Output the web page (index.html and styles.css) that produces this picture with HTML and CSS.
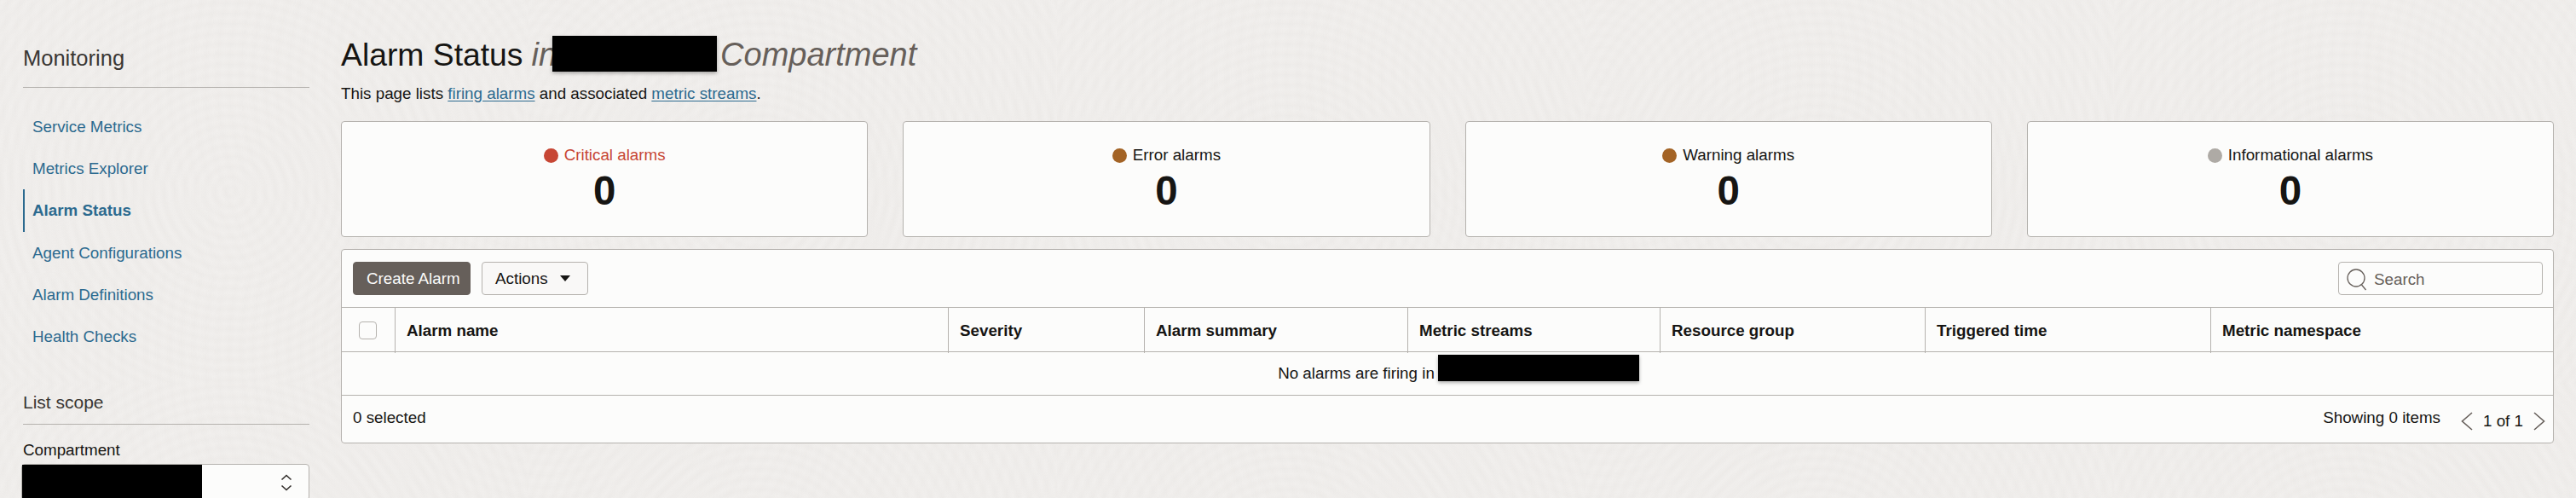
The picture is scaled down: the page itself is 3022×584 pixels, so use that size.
FILE: index.html
```html
<!DOCTYPE html>
<html>
<head>
  <title>Alarm Status</title>
  <meta http-equiv="Content-Type" content="text/html; charset=utf-8">
  <link rel="stylesheet" href="styles.css">
</head>
<body>
<div class="page">
  <div class="sidebar">
    <h2 class="side-title">Monitoring</h2>
    <ul class="side-nav">
      <li><a href="#">Service Metrics</a></li>
      <li><a href="#">Metrics Explorer</a></li>
      <li class="active"><a href="#">Alarm Status</a></li>
      <li><a href="#">Agent Configurations</a></li>
      <li><a href="#">Alarm Definitions</a></li>
      <li><a href="#">Health Checks</a></li>
    </ul>
    <h3 class="scope-title">List scope</h3>
    <div class="scope-label">Compartment</div>
    <div class="scope-select">
      <span class="redact redact-select"></span>
      <svg class="updown" width="14" height="20" viewBox="0 0 14 20">
        <path d="M1.5 6.5 7 1.5l5.5 5M1.5 13.5 7 18.5l5.5-5" fill="none" stroke="#312d2a" stroke-width="1.6"/>
      </svg>
    </div>
  </div>

  <div class="main">
    <h1 class="title">
      <span>Alarm Status</span>
      <em class="title-in">in</em>
      <span class="redact redact-title"></span>
      <em class="title-comp">Compartment</em>
    </h1>
    <p class="intro">This page lists <a href="#">firing alarms</a> and associated <a href="#">metric streams</a>.</p>

    <div class="cards">
      <div class="card">
        <div class="card-label critical"><i class="dot dot-critical"></i>Critical alarms</div>
        <div class="card-count">0</div>
      </div>
      <div class="card">
        <div class="card-label"><i class="dot dot-error"></i>Error alarms</div>
        <div class="card-count">0</div>
      </div>
      <div class="card">
        <div class="card-label"><i class="dot dot-error"></i>Warning alarms</div>
        <div class="card-count">0</div>
      </div>
      <div class="card">
        <div class="card-label"><i class="dot dot-info"></i>Informational alarms</div>
        <div class="card-count">0</div>
      </div>
    </div>

    <div class="panel">
      <div class="toolbar">
        <button class="btn btn-primary">Create Alarm</button>
        <button class="btn btn-menu">Actions <i class="caret"></i></button>
        <div class="search">
          <svg width="26" height="28" viewBox="0 0 26 28">
            <circle cx="12" cy="12" r="10" fill="none" stroke="#665f5a" stroke-width="1.3"/>
            <path d="M18.5 20 23.5 26" fill="none" stroke="#665f5a" stroke-width="1.3"/>
          </svg>
          <span>Search</span>
        </div>
      </div>

      <div class="thead">
        <div class="th th-check"><span class="checkbox"></span></div>
        <div class="th">Alarm name</div>
        <div class="th">Severity</div>
        <div class="th">Alarm summary</div>
        <div class="th">Metric streams</div>
        <div class="th">Resource group</div>
        <div class="th">Triggered time</div>
        <div class="th">Metric namespace</div>
      </div>

      <div class="empty-row">
        <span>No alarms are firing in</span>
        <span class="redact redact-row"></span>
      </div>

      <div class="tfoot">
        <span>0 selected</span>
        <span class="showing">Showing 0 items</span>
        <div class="pager">
          <svg width="14" height="22" viewBox="0 0 14 22"><path d="M13 1 1.500 11 13 21" fill="none" stroke="#665f5a" stroke-width="1.6"/></svg>
          <span>1 of 1</span>
          <svg width="14" height="22" viewBox="0 0 14 22"><path d="M1 1l11.500 10L1 21" fill="none" stroke="#665f5a" stroke-width="1.6"/></svg>
        </div>
      </div>
    </div>
  </div>
</div>
</body>
</html>
```

FILE: styles.css
```css
html, body {
  margin: 0;
  height: 584px;
  overflow: hidden;
}

body {
  background-color: #f1efed;
  background-image:
    repeating-radial-gradient(circle at 270px 225px, rgba(150, 142, 135, 0) 0, rgba(150, 142, 135, 0.022) 6px, rgba(150, 142, 135, 0) 12px),
    repeating-radial-gradient(circle at 640px 90px, rgba(150, 142, 135, 0) 0, rgba(150, 142, 135, 0.015) 7px, rgba(150, 142, 135, 0) 14px);
  background-size: 620px 450px, 1240px 320px;
  font-family: "Liberation Sans", Arial, sans-serif;
  font-size: 18.8px;
  color: #161513;
}

a {
  color: #2c6a8f;
  text-decoration: none;
}

.page {
  display: flex;
  gap: 37px;
  padding-left: 27px;
  padding-right: 26px;
}

/* left column */
.sidebar {
  width: 336px;
  flex: none;
}

.side-title {
  margin: 50px 0 0;
  height: 52px;
  line-height: 36px;
  font-size: 25.5px;
  font-weight: normal;
  color: #3a3734;
  border-bottom: 1px solid #b5b2ae;
}

.side-nav {
  list-style: none;
  margin: 21px 0 0;
  padding: 0;
}

.side-nav li {
  height: 49.2px;
  line-height: 50px;
  padding-left: 11px;
}

.side-nav li.active {
  padding-left: 9px;
  border-left: 2px solid #2c6a8f;
  font-weight: bold;
}

.scope-title {
  margin: 38px 0 0;
  height: 40px;
  line-height: 30px;
  font-size: 21px;
  font-weight: normal;
  color: #3a3734;
  border-bottom: 1px solid #b5b2ae;
}

.scope-label {
  margin-top: 18px;
  height: 24px;
  line-height: 24px;
}

.scope-select {
  display: flex;
  align-items: center;
  justify-content: space-between;
  height: 41px;
  margin: 4px 0 0 -2px;
  padding-right: 19px;
  background: #fcfcfb;
  border: 1px solid #b5b2ae;
  border-radius: 4px;
}

/* black boxes over private names */
.redact {
  display: block;
  background: #000;
  box-shadow: 0 2px 4px rgba(0, 0, 0, 0.3);
}

.redact-select {
  width: 211px;
  height: 41px;
  box-shadow: none;
}

.updown {
  margin-top: 1px;
}

/* main column */
.main {
  flex: 1;
  min-width: 0;
}

.title {
  display: flex;
  margin: 41px 0 0;
  height: 46px;
  line-height: 46px;
  font-size: 37.3px;
  font-weight: normal;
}

.title-in,
.title-comp {
  color: #665f5a;
  font-size: 38px;
}

.title-in {
  margin-left: 10px;
}

.redact-title {
  width: 193px;
  height: 42px;
  margin: 1px 0 0 -5px;
  flex: none;
}

.title-comp {
  margin-left: 4px;
}

.intro {
  margin: 11px 0 0;
  height: 24px;
  line-height: 24px;
}

.intro a {
  text-decoration: underline;
  text-underline-offset: 2px;
}

.cards {
  display: grid;
  grid-template-columns: repeat(4, 1fr);
  gap: 41px;
  margin-top: 20px;
}

.card {
  height: 136px;
  box-sizing: border-box;
  padding-top: 27px;
  text-align: center;
  background: #fcfcfb;
  border: 1px solid #b5b2ae;
  border-radius: 4px;
}

.card-label {
  display: flex;
  align-items: center;
  justify-content: center;
  height: 24px;
  line-height: 24px;
}

.critical {
  color: #c74634;
}

.dot {
  width: 17px;
  height: 17px;
  margin-right: 7px;
  border-radius: 50%;
}

.dot-critical { background: #c74634; }
.dot-error { background: #a36325; }
.dot-info { background: #aeaaa5; }

.card-count {
  margin-top: 3px;
  height: 54px;
  line-height: 54px;
  font-size: 47.5px;
  font-weight: bold;
}

.panel {
  margin-top: 14px;
  background: #fcfcfb;
  border: 1px solid #b5b2ae;
  border-radius: 4px;
}

.toolbar {
  display: flex;
  align-items: flex-start;
  gap: 13px;
  box-sizing: border-box;
  height: 68px;
  padding: 14px 12px 0 13px;
  border-bottom: 1px solid #b5b2ae;
}

.btn {
  box-sizing: border-box;
  height: 39px;
  padding: 0 15px;
  font: inherit;
  white-space: nowrap;
  border-radius: 4px;
}

.btn-primary {
  width: 138px;
  color: #fcfcfb;
  background: #665f5a;
  border: 1px solid #665f5a;
}

.btn-menu {
  display: flex;
  align-items: center;
  width: 125px;
  color: #161513;
  background: #f9f8f7;
  border: 1px solid #b5b2ae;
}

.caret {
  margin-left: 14px;
  border-top: 7px solid #161513;
  border-left: 6.5px solid transparent;
  border-right: 6.5px solid transparent;
}

.search {
  display: flex;
  align-items: center;
  gap: 7px;
  box-sizing: border-box;
  width: 240px;
  height: 39px;
  margin-left: auto;
  padding: 2px 8px 0;
  color: #665f5a;
  border: 1px solid #b5b2ae;
  border-radius: 4px;
}

.thead {
  display: grid;
  grid-template-columns: 62px 649px 230px 309px 296px 311px 335px 1fr;
  box-sizing: border-box;
  height: 52px;
  border-bottom: 1px solid #b5b2ae;
}

.th {
  padding-left: 13px;
  line-height: 53px;
  font-weight: bold;
  border-left: 1px solid #b5b2ae;
}

.th-check {
  display: flex;
  align-items: center;
  padding-left: 20px;
  border-left: 0;
}

.checkbox {
  box-sizing: border-box;
  width: 21px;
  height: 21px;
  background: #fcfcfb;
  border: 1px solid #b5b2ae;
  border-radius: 4px;
}

.empty-row {
  display: flex;
  align-items: center;
  justify-content: center;
  gap: 4px;
  box-sizing: border-box;
  height: 51px;
  padding-right: 2px;
  border-bottom: 1px solid #b5b2ae;
}

.redact-row {
  width: 236px;
  height: 31px;
  margin: 0 -28px 14px 0;
}

.tfoot {
  display: flex;
  align-items: flex-start;
  height: 55px;
  padding: 14px 9px 0 13px;
  box-sizing: border-box;
  line-height: 24px;
}

.showing {
  margin-left: auto;
}

.pager {
  display: flex;
  align-items: center;
  gap: 12px;
  margin: 4px 0 0 24px;
}
```
